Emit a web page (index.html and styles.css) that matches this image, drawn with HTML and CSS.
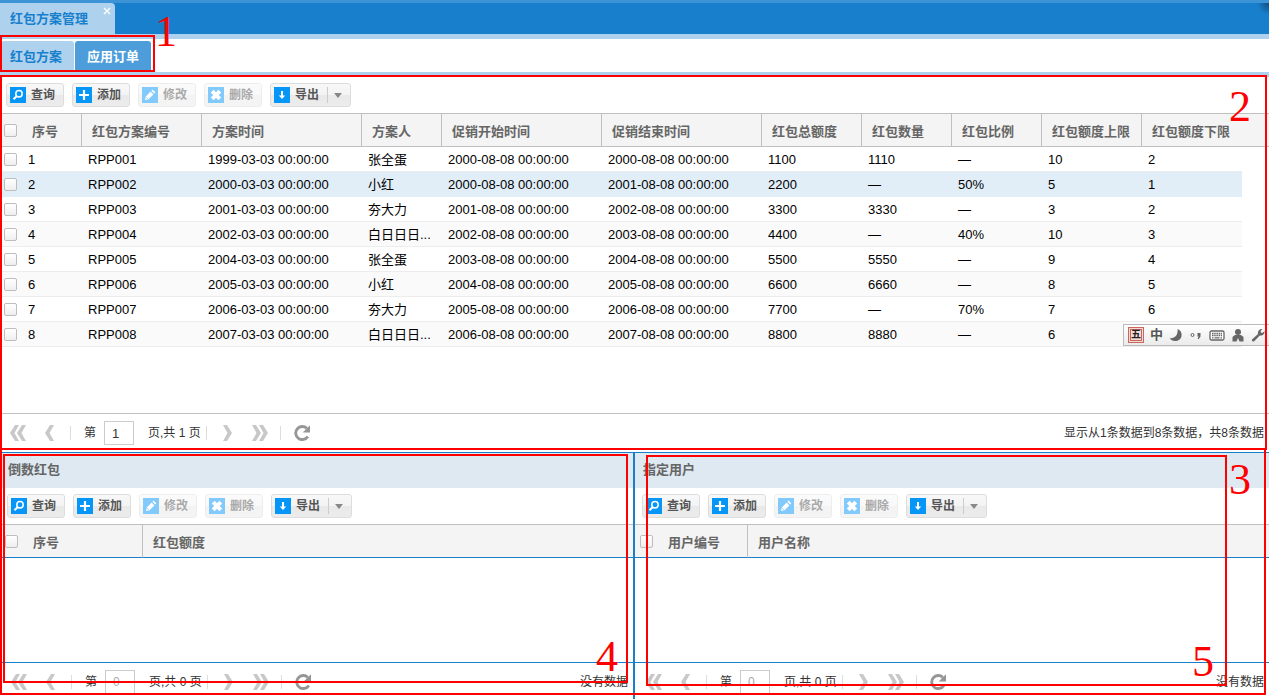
FILE: index.html
```html
<!DOCTYPE html>
<html lang="zh-CN">
<head>
<meta charset="utf-8">
<title>红包方案管理</title>
<link rel="stylesheet" href="styles.css">
</head>
<body>
<svg class="sprite" aria-hidden="true">
  <symbol id="i-search" viewBox="0 0 16 16"><circle cx="9" cy="6.800" r="3.200" fill="none" stroke="#fff" stroke-width="1.500"/><path d="M6.600 9.200 3.500 12.300" stroke="#fff" stroke-width="2"/></symbol>
  <symbol id="i-add" viewBox="0 0 16 16"><path d="M8 3v10M3 8h10" stroke="#fff" stroke-width="2.2"/></symbol>
  <symbol id="i-edit" viewBox="0 0 16 16"><path d="M3 13l.8-3.6 4.8-4.8 2.8 2.8-4.8 4.8zM9.4 3.8l1.2-1.2 2.8 2.8-1.2 1.2z" fill="#fff"/><path d="M4.3 10.3l1.5 1.5" stroke="#0696f8" stroke-width=".9"/></symbol>
  <symbol id="i-del" viewBox="0 0 16 16"><path d="M4.2 4.2l7.6 7.6M11.8 4.2l-7.6 7.6" stroke="#fff" stroke-width="4"/></symbol>
  <symbol id="i-down" viewBox="0 0 16 16"><path d="M7 4h2v4.6h2.2L8 12 4.8 8.6H7z" fill="#fff"/></symbol>
  <symbol id="i-first" viewBox="0 0 16 16"><path d="M5 0h4L4.500 8 9 16H5L0 8zM12 0h4l-4.500 8 4.500 8h-4L7 8z" fill="#c8c8c8"/></symbol>
  <symbol id="i-prev" viewBox="0 0 10 16"><path d="M5 0h4L4.500 8 9 16H5L0 8z" fill="#c8c8c8"/></symbol>
  <symbol id="i-next" viewBox="0 0 10 16"><path d="M5 0H1l4.500 8L1 16h4l5-8z" fill="#c8c8c8"/></symbol>
  <symbol id="i-last" viewBox="0 0 16 16"><path d="M11 0H7l4.500 8L7 16h4l5-8zM4 0H0l4.500 8L0 16h4l5-8z" fill="#c8c8c8"/></symbol>
  <symbol id="i-reload" viewBox="0 0 16 16"><path d="M12.800 3.400A6.500 6.500 0 1 0 13.800 11.400" fill="none" stroke="#969696" stroke-width="2.900"/><path d="M16 .2v7.300H8.700z" fill="#969696"/></symbol>
</svg>

<header class="top">
  <div class="top-tab"><a href="#plan">红包方案管理</a><button class="close" type="button" aria-label="关闭"><svg viewBox="0 0 8 8"><path d="M1 1l6 6M7 1 1 7" stroke="#fff" stroke-width="1.300"/></svg></button></div>
</header>
<nav class="subtabs">
  <a class="subtab" href="#plan">红包方案</a>
  <a class="subtab active" href="#order">应用订单</a>
</nav>

<main class="pane main-pane" id="plan">
  <div class="toolbar">
    <button class="btn" type="button"><svg class="ico"><use href="#i-search"/></svg>查询</button>
    <button class="btn" type="button"><svg class="ico"><use href="#i-add"/></svg>添加</button>
    <button class="btn" type="button" disabled><svg class="ico"><use href="#i-edit"/></svg>修改</button>
    <button class="btn" type="button" disabled><svg class="ico"><use href="#i-del"/></svg>删除</button>
    <button class="btn" type="button"><svg class="ico"><use href="#i-down"/></svg>导出<span class="caret"></span></button>
  </div>
  <div class="grid-body">
    <table class="grid">
      <colgroup><col class="c-check"><col class="w60"><col class="w120"><col class="w160"><col class="w80"><col class="w160"><col class="w160"><col class="w100"><col class="w90"><col class="w90"><col class="w100"><col class="w100"><col></colgroup>
      <thead><tr><th class="check"><input type="checkbox" aria-label="全选"></th><th>序号</th><th>红包方案编号</th><th>方案时间</th><th>方案人</th><th>促销开始时间</th><th>促销结束时间</th><th>红包总额度</th><th>红包数量</th><th>红包比例</th><th>红包额度上限</th><th class="open">红包额度下限</th><th class="open"></th></tr></thead>
      <tbody>
        <tr><td class="check"><input type="checkbox" aria-label="选择 1"></td><td>1</td><td>RPP001</td><td>1999-03-03 00:00:00</td><td>张全蛋</td><td>2000-08-08 00:00:00</td><td>2000-08-08 00:00:00</td><td>1100</td><td>1110</td><td>—</td><td>10</td><td>2</td></tr>
        <tr class="selected"><td class="check"><input type="checkbox" aria-label="选择 2"></td><td>2</td><td>RPP002</td><td>2000-03-03 00:00:00</td><td>小红</td><td>2000-08-08 00:00:00</td><td>2001-08-08 00:00:00</td><td>2200</td><td>—</td><td>50%</td><td>5</td><td>1</td></tr>
        <tr><td class="check"><input type="checkbox" aria-label="选择 3"></td><td>3</td><td>RPP003</td><td>2001-03-03 00:00:00</td><td>夯大力</td><td>2001-08-08 00:00:00</td><td>2002-08-08 00:00:00</td><td>3300</td><td>3330</td><td>—</td><td>3</td><td>2</td></tr>
        <tr><td class="check"><input type="checkbox" aria-label="选择 4"></td><td>4</td><td>RPP004</td><td>2002-03-03 00:00:00</td><td>白日日日...</td><td>2002-08-08 00:00:00</td><td>2003-08-08 00:00:00</td><td>4400</td><td>—</td><td>40%</td><td>10</td><td>3</td></tr>
        <tr><td class="check"><input type="checkbox" aria-label="选择 5"></td><td>5</td><td>RPP005</td><td>2004-03-03 00:00:00</td><td>张全蛋</td><td>2003-08-08 00:00:00</td><td>2004-08-08 00:00:00</td><td>5500</td><td>5550</td><td>—</td><td>9</td><td>4</td></tr>
        <tr><td class="check"><input type="checkbox" aria-label="选择 6"></td><td>6</td><td>RPP006</td><td>2005-03-03 00:00:00</td><td>小红</td><td>2004-08-08 00:00:00</td><td>2005-08-08 00:00:00</td><td>6600</td><td>6660</td><td>—</td><td>8</td><td>5</td></tr>
        <tr><td class="check"><input type="checkbox" aria-label="选择 7"></td><td>7</td><td>RPP007</td><td>2006-03-03 00:00:00</td><td>夯大力</td><td>2005-08-08 00:00:00</td><td>2006-08-08 00:00:00</td><td>7700</td><td>—</td><td>70%</td><td>7</td><td>6</td></tr>
        <tr><td class="check"><input type="checkbox" aria-label="选择 8"></td><td>8</td><td>RPP008</td><td>2007-03-03 00:00:00</td><td>白日日日...</td><td>2006-08-08 00:00:00</td><td>2007-08-08 00:00:00</td><td>8800</td><td>8880</td><td>—</td><td>6</td><td></td></tr>
      </tbody>
    </table>
  </div>
  <footer class="pager">
    <button class="nav wide" type="button" aria-label="首页"><svg><use href="#i-first"/></svg></button>
    <button class="nav prev" type="button" aria-label="上一页"><svg><use href="#i-prev"/></svg></button>
    <i class="sep"></i>
    <label class="page">第<input type="text" value="1"></label>
    <span class="count">页,共 1 页</span>
    <i class="sep"></i>
    <button class="nav next" type="button" aria-label="下一页"><svg><use href="#i-next"/></svg></button>
    <button class="nav wide" type="button" aria-label="末页"><svg><use href="#i-last"/></svg></button>
    <i class="sep"></i>
    <button class="nav wide" type="button" aria-label="刷新"><svg><use href="#i-reload"/></svg></button>
    <span class="status">显示从1条数据到8条数据，共8条数据</span>
  </footer>
</main>

<div class="bottom">
  <section class="pane left">
    <h2>倒数红包</h2>
    <div class="toolbar">
      <button class="btn" type="button"><svg class="ico"><use href="#i-search"/></svg>查询</button>
      <button class="btn" type="button"><svg class="ico"><use href="#i-add"/></svg>添加</button>
      <button class="btn" type="button" disabled><svg class="ico"><use href="#i-edit"/></svg>修改</button>
      <button class="btn" type="button" disabled><svg class="ico"><use href="#i-del"/></svg>删除</button>
      <button class="btn" type="button"><svg class="ico"><use href="#i-down"/></svg>导出<span class="caret"></span></button>
    </div>
    <div class="grid-body">
      <table class="grid">
        <colgroup><col class="c-check"><col class="w120"><col></colgroup>
        <thead><tr><th class="check"><input type="checkbox" aria-label="全选"></th><th>序号</th><th class="open">红包额度</th></tr></thead>
      </table>
    </div>
    <footer class="pager">
      <button class="nav wide" type="button" aria-label="首页"><svg><use href="#i-first"/></svg></button>
      <button class="nav prev" type="button" aria-label="上一页"><svg><use href="#i-prev"/></svg></button>
      <i class="sep"></i>
      <label class="page">第<input type="text" value="0" disabled></label>
      <span class="count">页,共 0 页</span>
      <i class="sep"></i>
      <button class="nav next" type="button" aria-label="下一页"><svg><use href="#i-next"/></svg></button>
      <button class="nav wide" type="button" aria-label="末页"><svg><use href="#i-last"/></svg></button>
      <i class="sep"></i>
      <button class="nav wide" type="button" aria-label="刷新"><svg><use href="#i-reload"/></svg></button>
      <span class="status">没有数据</span>
    </footer>
  </section>
  <section class="pane right">
    <h2>指定用户</h2>
    <div class="toolbar">
      <button class="btn" type="button"><svg class="ico"><use href="#i-search"/></svg>查询</button>
      <button class="btn" type="button"><svg class="ico"><use href="#i-add"/></svg>添加</button>
      <button class="btn" type="button" disabled><svg class="ico"><use href="#i-edit"/></svg>修改</button>
      <button class="btn" type="button" disabled><svg class="ico"><use href="#i-del"/></svg>删除</button>
      <button class="btn" type="button"><svg class="ico"><use href="#i-down"/></svg>导出<span class="caret"></span></button>
    </div>
    <div class="grid-body">
      <table class="grid">
        <colgroup><col class="c-check"><col class="w90"><col></colgroup>
        <thead><tr><th class="check"><input type="checkbox" aria-label="全选"></th><th>用户编号</th><th class="open">用户名称</th></tr></thead>
      </table>
    </div>
    <footer class="pager">
      <button class="nav wide" type="button" aria-label="首页"><svg><use href="#i-first"/></svg></button>
      <button class="nav prev" type="button" aria-label="上一页"><svg><use href="#i-prev"/></svg></button>
      <i class="sep"></i>
      <label class="page">第<input type="text" value="0" disabled></label>
      <span class="count">页,共 0 页</span>
      <i class="sep"></i>
      <button class="nav next" type="button" aria-label="下一页"><svg><use href="#i-next"/></svg></button>
      <button class="nav wide" type="button" aria-label="末页"><svg><use href="#i-last"/></svg></button>
      <i class="sep"></i>
      <button class="nav wide" type="button" aria-label="刷新"><svg><use href="#i-reload"/></svg></button>
      <span class="status">没有数据</span>
    </footer>
  </section>
</div>

<div class="ime">
  <span class="wubi">五</span>
  <span class="zh">中</span>
  <svg viewBox="0 0 14 14"><path d="M8.500 1C14 3 14 10.500 9 12.500 5.500 13.800 2 12.500.6 10 5 11 9.500 7.500 8.500 1z" fill="#666"/></svg>
  <svg viewBox="0 0 14 14"><circle cx="3.500" cy="7" r="1.500" fill="none" stroke="#666"/><path d="M8.500 5h3v3.500L9.800 11H8.600l1-2.500H8.500z" fill="#666"/></svg>
  <svg class="kbd" viewBox="0 0 16 14"><rect x="1" y="3" width="14" height="9" rx="1.500" fill="#fff" stroke="#666" stroke-width="1.300"/><path d="M3 5.500h10M3 7.500h10" stroke="#666" stroke-width="1.300" stroke-dasharray="1.500 .7"/><path d="M3 9.800h1.500M5.500 9.800h5M11.500 9.800H13" stroke="#666" stroke-width="1.300"/></svg>
  <svg viewBox="0 0 14 14"><circle cx="7" cy="4" r="3" fill="#666"/><path d="M4 7h6l2.500 2v4.500h-4L7 10l-1.500 3.500h-4V9z" fill="#666"/></svg>
  <svg viewBox="0 0 14 14"><path d="M1 11.500 7 6C6.300 3 8.500.5 11.500 1L9.600 3l.4 1.500 1.500.4 2-1.900c.6 3-2 5.300-4.700 4.600L3 13.500C1.500 14 .5 12.500 1 11.500z" fill="#666"/></svg>
</div>

<div class="mark m1"><b>1</b></div>
<div class="mark m2"><b>2</b></div>
<div class="mark m3"><b>3</b></div>
<div class="mark m4"><b>4</b></div>
<div class="mark m5"><b>5</b></div>
</body>
</html>
```

FILE: styles.css
```css
* { box-sizing: border-box; }

body {
  position: relative;
  display: flex;
  flex-direction: column;
  height: 100vh;
  margin: 0;
  overflow: hidden;
  background: #fff;
  color: #000;
  font: 13px/18px "Liberation Sans", "Noto Sans CJK SC", sans-serif;
}

a { color: inherit; text-decoration: none; }
button, input { margin: 0; font: inherit; color: inherit; }
button { padding: 0; border: 0; background: none; }
svg { display: block; }
.sprite { position: absolute; width: 0; height: 0; }

/* window tabs */
.top {
  display: flex;
  flex: none;
  height: 39px;
  border-top: 3px solid #3c94d6;
  border-bottom: 5px solid #aed2ee;
  background: radial-gradient(circle at 100% 0, #0d4f80, #187fcd 12px);
}
.top-tab {
  display: flex;
  padding: 7px 3px 0 10px;
  gap: 16px;
  border-radius: 0 4px 0 0;
  background: #aed2ee;
  color: #187fcd;
  font-weight: bold;
}
.close { width: 8px; height: 8px; margin-top: -3px; }
.close svg { width: 8px; height: 8px; margin-left: -1px; }

.subtabs {
  display: flex;
  flex: none;
  gap: 1px;
  height: 38px;
  padding: 2px 0 2px 1px;
  border-bottom: 5px solid #aed2ee;
}
.subtab {
  padding: 7px 12px 0 9px;
  border-radius: 3px 3px 0 0;
  background: #aed2ee;
  color: #187fcd;
  font-weight: bold;
}
.subtab.active {
  padding-left: 12px;
  background: #4d9ddb;
  color: #fff;
}

/* panes */
.pane { --lead: 0px; display: flex; flex-direction: column; min-width: 0; }
.main-pane { flex: 1; min-height: 0; }
.bottom {
  display: flex;
  flex: none;
  margin-top: 2px;
  border-top: 1px solid #187fcd;
}
.bottom .left { --lead: 1px; flex: 1 1 0; }
.bottom .right { --lead: 1px; flex: 1 1 3px; border-left: 2px solid #187fcd; }
.bottom .grid-body { min-height: 138px; }
h2 {
  margin: 0;
  padding: 8px 0 9px calc(7px + var(--lead));
  background: #dfe9f2;
  color: #666;
  font-size: 13px;
  line-height: 18px;
}

.toolbar {
  display: flex;
  gap: 8px;
  padding: 6px 0 6px calc(6px + var(--lead));
}
.btn {
  display: flex;
  align-items: center;
  gap: 5px;
  height: 24px;
  padding: 0 8px 0 3px;
  border: 1px solid #ddd;
  border-radius: 3px;
  background: linear-gradient(#f8f8f8, #f3f3f3 50%, #e9e9e9 50%, #ececec);
  color: #555;
  font-size: 12px;
  font-weight: bold;
}
.btn:disabled { opacity: .5; }
.ico { width: 16px; height: 16px; background: #0696f8; }
.caret {
  display: flex;
  align-items: center;
  height: 16px;
  margin-left: 3px;
  padding-left: 6px;
  border-left: 1px solid #ccc;
}
.caret::before {
  content: "";
  border: 4px solid transparent;
  border-top: 5px solid #888;
  border-bottom: 0;
}

/* data grids */
.grid-body { flex: 1; }
.grid {
  width: 100%;
  border-collapse: separate;
  border-spacing: 0;
  table-layout: fixed;
}
.c-check { width: calc(22px + var(--lead)); }
.w60 { width: 60px; }
.w80 { width: 80px; }
.w90 { width: 90px; }
.w100 { width: 100px; }
.w120 { width: 120px; }
.w160 { width: 160px; }
th {
  height: 34px;
  padding: 3px 0 0 10px;
  border: solid #c0c0c0;
  border-width: 1px 1px 1px 0;
  background: #f4f4f4;
  color: #666;
  text-align: left;
  white-space: nowrap;
}
.bottom th { border-bottom-color: #187fcd; }
th.open { border-right: 0; }
td {
  height: 25px;
  padding: 1px 0 0 6px;
  border-bottom: 1px solid #ededed;
  white-space: nowrap;
}
tr:nth-child(even) td { background: #fafafa; }
tr.selected td { background: #e1eef8; border-bottom-color: #e1eef8; }
th.check, td.check { padding: 0 0 0 calc(4px + var(--lead)); border-right: 0; }
.check input {
  display: block;
  width: 13px;
  height: 13px;
  appearance: none;
  border: 1px solid #bdbdbd;
  border-radius: 2px;
  background: linear-gradient(#fff, #eee);
}

/* paging bar */
.pager {
  display: flex;
  align-items: center;
  height: 37px;
  padding: 2px 5px 0 calc(10px + var(--lead));
  border-top: 1px solid #c0c0c0;
  color: #333;
  font-size: 12px;
  white-space: nowrap;
}
.bottom .pager { border-color: #187fcd; }
.nav svg { width: 100%; height: 16px; }
.wide { width: 16px; }
.prev { width: 10px; margin: 0 15px 0 19px; }
.next { width: 10px; margin: 0 20px 0 15px; }
.sep { width: 1px; height: 14px; background: #ddd; }
.wide + .sep { margin: 0 13px 0 12px; }
.page { display: flex; align-items: center; gap: 8px; margin: 0 14px 0 13px; }
.page input {
  width: 30px;
  height: 24px;
  padding: 0 0 0 7px;
  border: 1px solid #ccc;
  background: #fff;
  font-size: 13px;
}
.page input:disabled { color: #aaa; font-size: 12px; }
.count { margin-right: 5px; }
.status { margin-left: auto; }

/* input-method bar floating over the grid */
.ime {
  position: absolute;
  top: 324px;
  right: 0;
  display: flex;
  align-items: center;
  gap: 6px;
  height: 22px;
  padding: 0 4px;
  border: 1px solid #bbb;
  border-right: 0;
  background: linear-gradient(#fff, #ebebeb);
  color: #555;
  font-weight: bold;
}
.ime svg { width: 14px; height: 14px; }
.ime .kbd { width: 16px; }
.wubi {
  width: 16px;
  height: 16px;
  border: 3px double #c8685c;
  background: #f3dcd8;
  color: #222;
  font-size: 10px;
  line-height: 10px;
  text-align: center;
}

/* numbered callouts */
.mark { position: absolute; border: 2px solid #f00; pointer-events: none; }
.mark b {
  position: absolute;
  color: #f00;
  font: 44px/30px "Liberation Serif", serif;
}
.m1 { top: 35px; left: 0; width: 155px; height: 37px; }
.m1 b { top: -20px; right: -24px; }
.m2 { top: 75px; left: 0; right: 2px; bottom: 249px; }
.m2 b { top: 15px; right: 14px; }
.m3 { left: 0; right: 3px; bottom: 4px; height: 247px; }
.m3 b { top: 15px; right: 13px; }
.m4 { left: 3px; right: 641px; bottom: 16px; height: 229px; }
.m4 b { bottom: 9px; right: 8px; }
.m5 { left: 646px; right: 42px; bottom: 13px; height: 231px; }
.m5 b { bottom: 7px; right: 11px; }
```
